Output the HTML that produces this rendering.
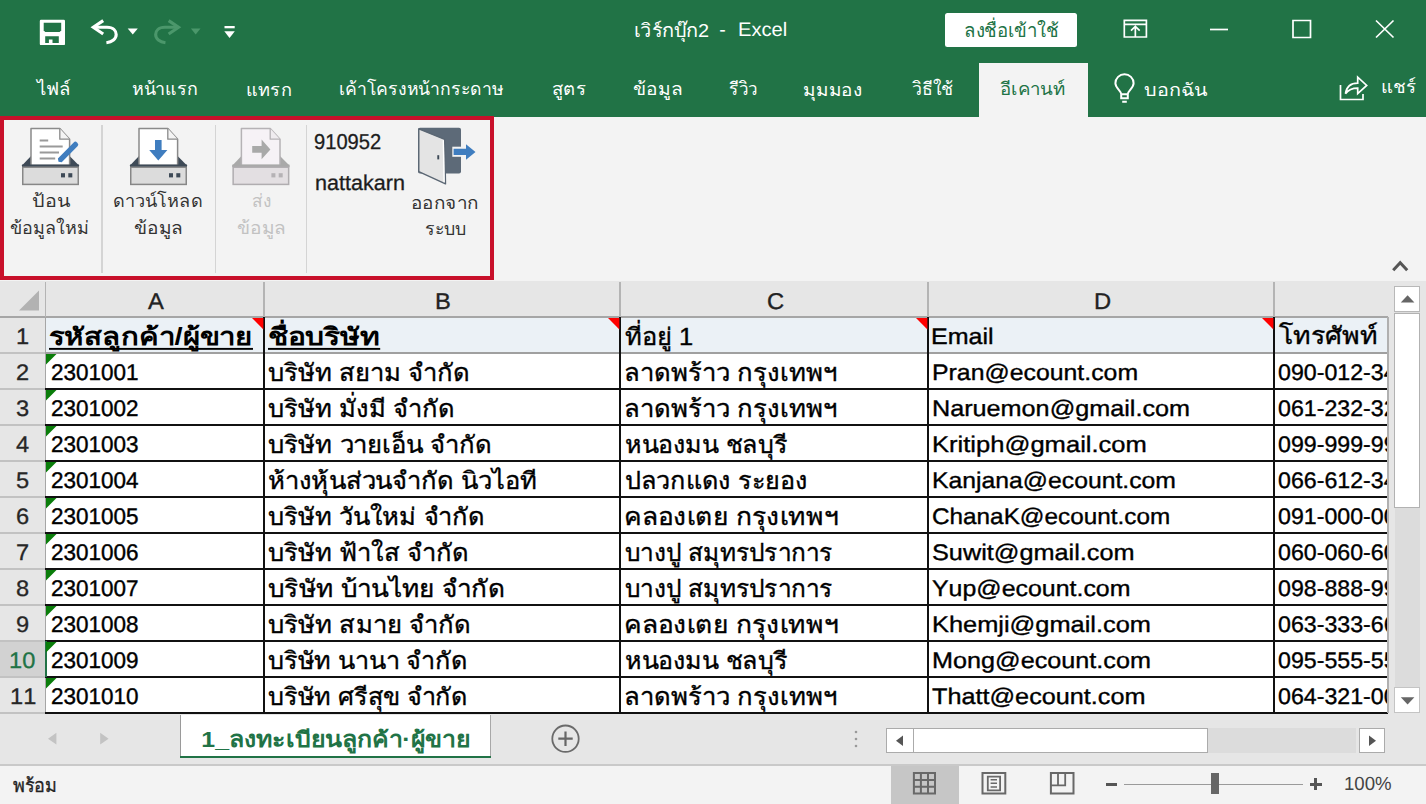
<!DOCTYPE html>
<html lang="th"><head><meta charset="utf-8"><title>Excel</title>
<style>
html,body{margin:0;padding:0}
body{width:1426px;height:804px;overflow:hidden;position:relative;background:#f3f3f3;font-family:"Liberation Sans",sans-serif}
body div,body span.l,body svg.t,body span.sr{position:absolute}
span.l{white-space:nowrap;transform-origin:0 50%;text-rendering:geometricPrecision;font-kerning:none}
span.sr{font-size:1px;line-height:1px;width:1px;height:1px;overflow:hidden;color:transparent;white-space:nowrap}
svg.t{overflow:visible}
svg.t text{font-family:"Liberation Sans",sans-serif;white-space:pre}
</style></head><body>
<div style="left:0px;top:0px;width:1426px;height:116.5px;background:#217346;"></div>
<div style="left:979.2px;top:62.6px;width:108.4px;height:54.9px;background:#f3f3f3;"></div>
<div style="left:945px;top:12.6px;width:131.8px;height:34.2px;background:#fff;border-radius:2.5px;"></div>
<div style="left:0px;top:116.5px;width:1426px;height:164.5px;background:#f3f3f3;"></div>
<div style="left:0;top:116px;width:494px;height:164px;border:4px solid #c8102a;box-sizing:border-box"></div>
<div style="left:101.4px;top:125px;width:1.2px;height:148px;background:#d4d4d4;"></div>
<div style="left:214.7px;top:125px;width:1.2px;height:148px;background:#d4d4d4;"></div>
<div style="left:306.3px;top:125px;width:1.2px;height:148px;background:#d4d4d4;"></div>
<svg class="t" style="left:633px;top:18.1px" width="77.5" height="28.48" viewBox="-1.06 -19.3 77.5 28.48"><text x="0" y="0" font-size="19" fill="#fff" textLength="75" lengthAdjust="spacingAndGlyphs">เวิร์กบุ๊ก2</text></svg>
<span class="l" style="left:719.3px;top:20.89px;font-size:19.5px;line-height:19.5px;color:#fff;">-</span>
<span class="l" style="left:738px;top:20.89px;font-size:19.5px;line-height:19.5px;color:#fff;transform:scaleX(1.0318);">Excel</span>
<svg class="t" style="left:961.7px;top:13.88px" width="98.6" height="26.27" viewBox="-1.88 -23.12 98.6 26.27"><text x="0" y="0" font-size="19" fill="#217346" textLength="95" lengthAdjust="spacingAndGlyphs">ลงชื่อเข้าใช้</text></svg>
<svg class="t" style="left:33px;top:75.93px" width="40.5" height="22.32" viewBox="-3.69 -19.17 40.5 22.32"><text x="0" y="0" font-size="18" fill="#fff" textLength="34" lengthAdjust="spacingAndGlyphs">ไฟล์</text></svg>
<svg class="t" style="left:129px;top:76.62px" width="70.8" height="21.63" viewBox="-2.66 -18.48 70.8 21.63"><text x="0" y="0" font-size="18" fill="#fff" textLength="66.5" lengthAdjust="spacingAndGlyphs">หน้าแรก</text></svg>
<svg class="t" style="left:245px;top:82.57px" width="48.2" height="15.67" viewBox="-1.18 -12.53 48.2 15.67"><text x="0" y="0" font-size="18" fill="#fff" textLength="45.6" lengthAdjust="spacingAndGlyphs">แทรก</text></svg>
<svg class="t" style="left:338px;top:75.99px" width="168" height="22.26" viewBox="-1.14 -19.11 168 22.26"><text x="0" y="0" font-size="18" fill="#fff" textLength="164.5" lengthAdjust="spacingAndGlyphs">เค้าโครงหน้ากระดาษ</text></svg>
<svg class="t" style="left:550.2px;top:82.28px" width="37.5" height="21.71" viewBox="-1.94 -12.82 37.5 21.71"><text x="0" y="0" font-size="18" fill="#fff" textLength="34" lengthAdjust="spacingAndGlyphs">สูตร</text></svg>
<svg class="t" style="left:630.5px;top:76.62px" width="52.8" height="27.37" viewBox="-2.33 -18.48 52.8 27.37"><text x="0" y="0" font-size="18" fill="#fff" textLength="49" lengthAdjust="spacingAndGlyphs">ข้อมูล</text></svg>
<svg class="t" style="left:725.6px;top:77.62px" width="32.9" height="20.63" viewBox="-3.44 -17.48 32.9 20.63"><text x="0" y="0" font-size="18" fill="#fff" textLength="28.2" lengthAdjust="spacingAndGlyphs">รีวิว</text></svg>
<svg class="t" style="left:801.3px;top:82.57px" width="62.7" height="21.41" viewBox="-2.27 -12.53 62.7 21.41"><text x="0" y="0" font-size="18" fill="#fff" textLength="58.9" lengthAdjust="spacingAndGlyphs">มุมมอง</text></svg>
<svg class="t" style="left:908.3px;top:75.93px" width="47.3" height="22.32" viewBox="-3.89 -19.17 47.3 22.32"><text x="0" y="0" font-size="18" fill="#fff" textLength="41.3" lengthAdjust="spacingAndGlyphs">วิธีใช้</text></svg>
<svg class="t" style="left:998px;top:76.63px" width="69.5" height="21.61" viewBox="-1.88 -18.46 69.5 21.61"><text x="0" y="0" font-size="18" fill="#217346" textLength="65.4" lengthAdjust="spacingAndGlyphs">อีเคานท์</text></svg>
<svg class="t" style="left:1142.4px;top:79.1px" width="67.2" height="20.65" viewBox="-2.44 -17.5 67.2 20.65"><text x="0" y="0" font-size="18" fill="#fff" textLength="62.7" lengthAdjust="spacingAndGlyphs">บอกฉัน</text></svg>
<svg class="t" style="left:1379.5px;top:75.21px" width="38.5" height="21.43" viewBox="-1.04 -18.29 38.5 21.43"><text x="0" y="0" font-size="18" fill="#fff" textLength="35.2" lengthAdjust="spacingAndGlyphs">แชร์</text></svg>
<svg class="t" style="left:29.6px;top:188.62px" width="41.8" height="21.63" viewBox="-2.44 -18.48 41.8 21.63"><text x="0" y="0" font-size="18" fill="#333" textLength="37.3" lengthAdjust="spacingAndGlyphs">ป้อน</text></svg>
<svg class="t" style="left:7.6px;top:215.43px" width="82.5" height="28.05" viewBox="-2.37 -19.17 82.5 28.05"><text x="0" y="0" font-size="18" fill="#333" textLength="78.7" lengthAdjust="spacingAndGlyphs">ข้อมูลใหม่</text></svg>
<svg class="t" style="left:111px;top:187.99px" width="93.5" height="22.26" viewBox="-2.11 -19.11 93.5 22.26"><text x="0" y="0" font-size="18" fill="#333" textLength="89.5" lengthAdjust="spacingAndGlyphs">ดาวน์โหลด</text></svg>
<svg class="t" style="left:132.3px;top:216.12px" width="52.5" height="27.37" viewBox="-2.33 -18.48 52.5 27.37"><text x="0" y="0" font-size="18" fill="#333" textLength="48.8" lengthAdjust="spacingAndGlyphs">ข้อมูล</text></svg>
<svg class="t" style="left:249.59px;top:189.23px" width="22.82" height="21.02" viewBox="-2.08 -17.87 22.82 21.02"><text x="0" y="0" font-size="18" fill="#c2c2c2" textLength="19.1" lengthAdjust="spacingAndGlyphs">ส่ง</text></svg>
<svg class="t" style="left:235px;top:216.12px" width="52.5" height="27.37" viewBox="-2.33 -18.48 52.5 27.37"><text x="0" y="0" font-size="18" fill="#c2c2c2" textLength="48.8" lengthAdjust="spacingAndGlyphs">ข้อมูล</text></svg>
<span class="l" style="left:313.5px;top:131.7px;font-size:21.5px;line-height:21.5px;color:#1c1c1c;-webkit-text-stroke:0.3px #1c1c1c;transform:scaleX(0.9366);">910952</span>
<span class="l" style="left:314.9px;top:173.4px;font-size:21.5px;line-height:21.5px;color:#1c1c1c;-webkit-text-stroke:0.3px #1c1c1c;transform:scaleX(1.0040);">nattakarn</span>
<svg class="t" style="left:409.4px;top:195.57px" width="71.4" height="15.53" viewBox="-1.63 -12.53 71.4 15.53"><text x="0" y="0" font-size="18" fill="#333" textLength="68.4" lengthAdjust="spacingAndGlyphs">ออกจาก</text></svg>
<svg class="t" style="left:422.3px;top:223.03px" width="45.6" height="15.62" viewBox="-2.73 -12.47 45.6 15.62"><text x="0" y="0" font-size="18" fill="#333" textLength="41.4" lengthAdjust="spacingAndGlyphs">ระบบ</text></svg>
<svg class="t" style="left:0;top:0" width="500" height="200"><path d="M31 156H69.6L79 165.5V167.2H22V165.5Z" fill="#3e4a57"/><path d="M31 128.4H59.8L69.6 139.2V165.4H31Z" fill="#fff" stroke="#8a8a8a" stroke-width="1.5" stroke-linejoin="round"/><path d="M59.8 128.4V139.2H69.6" fill="#f4f4f4" stroke="#8a8a8a" stroke-width="1.3" stroke-linejoin="round"/><path d="M22 164.6H79V167H22Z" fill="#3e4a57"/><rect x="22.75" y="167.2" width="55.5" height="17.2" fill="#dcdcdc" stroke="#878787" stroke-width="1.5"/><rect x="61" y="173.2" width="4" height="4.2" fill="#3e4a57"/><rect x="68.3" y="173.2" width="4" height="4.2" fill="#3e4a57"/><path d="M39.700 140.500H48.200M39.700 146.600H62.700M39.700 152.400H59M39.700 158.400H55.200" stroke="#9a9a9a" stroke-width="2"/><path d="M58.5 161.800L57.900 158.600L73.700 142.400A2.300 2.300 0 0 1 77 142.400L77.500 142.900A2.300 2.300 0 0 1 77.500 146.200L61.700 162.300Z" fill="#3f7dbf"/></svg>
<svg class="t" style="left:0;top:0" width="500" height="200"><path d="M139 156H177.6L187 165.5V167.2H130V165.5Z" fill="#3e4a57"/><path d="M139 128.4H167.79999999999998L177.6 139.2V165.4H139Z" fill="#fff" stroke="#8a8a8a" stroke-width="1.5" stroke-linejoin="round"/><path d="M167.79999999999998 128.4V139.2H177.6" fill="#f4f4f4" stroke="#8a8a8a" stroke-width="1.3" stroke-linejoin="round"/><path d="M130 164.6H187V167H130Z" fill="#3e4a57"/><rect x="130.75" y="167.2" width="55.5" height="17.2" fill="#dcdcdc" stroke="#878787" stroke-width="1.5"/><rect x="169" y="173.2" width="4" height="4.2" fill="#3e4a57"/><rect x="176.3" y="173.2" width="4" height="4.2" fill="#3e4a57"/><path d="M155 140H161.600V150H167.400L158.300 160.400L149.200 150H155Z" fill="#3f7dbf"/></svg>
<svg class="t" style="left:0;top:0" width="500" height="200"><path d="M241.4 156H280.0L289.4 165.5V167.2H232.4V165.5Z" fill="#a9a9a9"/><path d="M241.4 128.4H270.2L280.0 139.2V165.4H241.4Z" fill="#f6f2f6" stroke="#b5b2b5" stroke-width="1.5" stroke-linejoin="round"/><path d="M270.2 128.4V139.2H280.0" fill="#efecef" stroke="#b5b2b5" stroke-width="1.3" stroke-linejoin="round"/><path d="M232.4 164.6H289.4V167H232.4Z" fill="#a9a9a9"/><rect x="233.15" y="167.2" width="55.5" height="17.2" fill="#e3dfe2" stroke="#b0adb0" stroke-width="1.5"/><rect x="271.4" y="173.2" width="4" height="4.2" fill="#b5b2b5"/><rect x="278.7" y="173.2" width="4" height="4.2" fill="#b5b2b5"/><path d="M252.200 146H261.600V139.600L270.400 149.400L261.600 159.300V152.700H252.200Z" fill="#a9a9a9"/></svg>
<svg class="t" style="left:0;top:0" width="500" height="200">
<rect x="418" y="127.800" width="43" height="45.600" rx="2" fill="#5d6a78"/>
<path d="M452.300 146.700H462.500V156.800H452.300Z" fill="#f3f3f3"/>
<path d="M418.800 128.900L444.700 139.400L445.500 183.900L418.800 171.700Z" fill="#e4e4e4" stroke="#5a6673" stroke-width="1.400" stroke-linejoin="round"/>
<path d="M443.300 140.200L444.100 182.300" stroke="#fff" stroke-width="1.300"/>
<rect x="437.300" y="155.200" width="1.900" height="4.200" fill="#3e4a57"/>
<path d="M453.600 148.800H466V144.200L475.500 151.900L466 159.700V154.900H453.600Z" fill="#3f7dbf"/>
</svg>
<div style="left:0px;top:281px;width:1426px;height:36.2px;background:#e6e6e6;"></div>
<div style="left:0px;top:317.2px;width:45.4px;height:396px;background:#e6e6e6;"></div>
<div style="left:45.4px;top:317.2px;width:1342.2px;height:396px;background:#fff;"></div>
<div style="left:45.4px;top:317.2px;width:1342.2px;height:36px;background:#ebf1f6;"></div>
<div style="left:1387.6px;top:281px;width:38.4px;height:433.2px;background:#e6e6e6;"></div>
<div style="left:0px;top:641.2px;width:45.4px;height:36px;background:#d2d2d2;"></div>
<div style="left:0px;top:316.4px;width:1387.6px;height:1.5px;background:#a6a6a6;"></div>
<div style="left:44.6px;top:282px;width:1.5px;height:35.2px;background:#b4b4b4;"></div>
<div style="left:263px;top:282px;width:1.5px;height:35.2px;background:#b4b4b4;"></div>
<div style="left:619.2px;top:282px;width:1.5px;height:35.2px;background:#b4b4b4;"></div>
<div style="left:927.3px;top:282px;width:1.5px;height:35.2px;background:#b4b4b4;"></div>
<div style="left:1273.2px;top:282px;width:1.5px;height:35.2px;background:#b4b4b4;"></div>
<div style="left:0px;top:352.4px;width:45.4px;height:1.5px;background:#c2c2c2;"></div>
<div style="left:0px;top:388.4px;width:45.4px;height:1.5px;background:#c2c2c2;"></div>
<div style="left:0px;top:424.4px;width:45.4px;height:1.5px;background:#c2c2c2;"></div>
<div style="left:0px;top:460.4px;width:45.4px;height:1.5px;background:#c2c2c2;"></div>
<div style="left:0px;top:496.4px;width:45.4px;height:1.5px;background:#c2c2c2;"></div>
<div style="left:0px;top:532.4px;width:45.4px;height:1.5px;background:#c2c2c2;"></div>
<div style="left:0px;top:568.4px;width:45.4px;height:1.5px;background:#c2c2c2;"></div>
<div style="left:0px;top:604.4px;width:45.4px;height:1.5px;background:#c2c2c2;"></div>
<div style="left:0px;top:640.4px;width:45.4px;height:1.5px;background:#c2c2c2;"></div>
<div style="left:0px;top:676.4px;width:45.4px;height:1.5px;background:#c2c2c2;"></div>
<div style="left:0px;top:712.4px;width:45.4px;height:1.5px;background:#c2c2c2;"></div>
<div style="left:44.6px;top:317.2px;width:1.5px;height:396px;background:#a6a6a6;"></div>
<div style="left:45.4px;top:352.3px;width:1342.2px;height:1.8px;background:#a0a0a0;"></div>
<div style="left:45.4px;top:388.3px;width:1342.2px;height:1.8px;background:#111;"></div>
<div style="left:45.4px;top:424.3px;width:1342.2px;height:1.8px;background:#111;"></div>
<div style="left:45.4px;top:460.3px;width:1342.2px;height:1.8px;background:#111;"></div>
<div style="left:45.4px;top:496.3px;width:1342.2px;height:1.8px;background:#111;"></div>
<div style="left:45.4px;top:532.3px;width:1342.2px;height:1.8px;background:#111;"></div>
<div style="left:45.4px;top:568.3px;width:1342.2px;height:1.8px;background:#111;"></div>
<div style="left:45.4px;top:604.3px;width:1342.2px;height:1.8px;background:#111;"></div>
<div style="left:45.4px;top:640.3px;width:1342.2px;height:1.8px;background:#111;"></div>
<div style="left:45.4px;top:676.3px;width:1342.2px;height:1.8px;background:#111;"></div>
<div style="left:45.4px;top:712.3px;width:1342.2px;height:1.8px;background:#111;"></div>
<div style="left:262.9px;top:317.2px;width:1.8px;height:396px;background:#111;"></div>
<div style="left:619.1px;top:317.2px;width:1.8px;height:396px;background:#111;"></div>
<div style="left:927.2px;top:317.2px;width:1.8px;height:396px;background:#111;"></div>
<div style="left:1273.1px;top:317.2px;width:1.8px;height:396px;background:#111;"></div>
<div style="left:45.4px;top:712.2px;width:1342.2px;height:2.2px;background:#111;"></div>
<div style="left:1387.3px;top:317.2px;width:1.5px;height:396px;background:#b0b0b0;"></div>
<svg class="t" style="left:18px;top:290px" width="22" height="22"><path d="M21 0.5V20.5H1Z" fill="#b2b2b2"/></svg>
<span class="l" style="left:147.89px;top:290px;font-size:22.8px;line-height:22.8px;color:#222;-webkit-text-stroke:0.35px #222;transform:scaleX(1.0400);">A</span>
<span class="l" style="left:435.19px;top:290px;font-size:22.8px;line-height:22.8px;color:#222;-webkit-text-stroke:0.35px #222;transform:scaleX(1.0400);">B</span>
<span class="l" style="left:766.69px;top:290px;font-size:22.8px;line-height:22.8px;color:#222;-webkit-text-stroke:0.35px #222;transform:scaleX(1.0400);">C</span>
<span class="l" style="left:1093.69px;top:290px;font-size:22.8px;line-height:22.8px;color:#222;-webkit-text-stroke:0.35px #222;transform:scaleX(1.0400);">D</span>
<span class="l" style="left:16.03px;top:326.45px;font-size:22.5px;line-height:22.5px;color:#262626;-webkit-text-stroke:0.3px #262626;transform:scaleX(1.0500);">1</span>
<span class="l" style="left:16.03px;top:362.45px;font-size:22.5px;line-height:22.5px;color:#262626;-webkit-text-stroke:0.3px #262626;transform:scaleX(1.0500);">2</span>
<span class="l" style="left:16.03px;top:398.45px;font-size:22.5px;line-height:22.5px;color:#262626;-webkit-text-stroke:0.3px #262626;transform:scaleX(1.0500);">3</span>
<span class="l" style="left:16.03px;top:434.45px;font-size:22.5px;line-height:22.5px;color:#262626;-webkit-text-stroke:0.3px #262626;transform:scaleX(1.0500);">4</span>
<span class="l" style="left:16.03px;top:470.45px;font-size:22.5px;line-height:22.5px;color:#262626;-webkit-text-stroke:0.3px #262626;transform:scaleX(1.0500);">5</span>
<span class="l" style="left:16.03px;top:506.45px;font-size:22.5px;line-height:22.5px;color:#262626;-webkit-text-stroke:0.3px #262626;transform:scaleX(1.0500);">6</span>
<span class="l" style="left:16.03px;top:542.45px;font-size:22.5px;line-height:22.5px;color:#262626;-webkit-text-stroke:0.3px #262626;transform:scaleX(1.0500);">7</span>
<span class="l" style="left:16.03px;top:578.45px;font-size:22.5px;line-height:22.5px;color:#262626;-webkit-text-stroke:0.3px #262626;transform:scaleX(1.0500);">8</span>
<span class="l" style="left:16.03px;top:614.45px;font-size:22.5px;line-height:22.5px;color:#262626;-webkit-text-stroke:0.3px #262626;transform:scaleX(1.0500);">9</span>
<span class="l" style="left:9.46px;top:650.45px;font-size:22.5px;line-height:22.5px;color:#217346;-webkit-text-stroke:0.3px #217346;transform:scaleX(1.0500);">10</span>
<span class="l" style="left:10.34px;top:686.45px;font-size:22.5px;line-height:22.5px;color:#262626;-webkit-text-stroke:0.3px #262626;transform:scaleX(1.0500);">11</span>
<div style="left:44.9px;top:641.2px;width:2.2px;height:36px;background:#217346;"></div>
<svg class="t" style="left:46.6px;top:321.17px" width="208" height="33.13" viewBox="-1.5 -23.73 208 33.13"><text x="0" y="0" font-size="24" font-weight="bold" fill="#000" textLength="204" lengthAdjust="spacingAndGlyphs">รหัสลูกค้า/ผู้ขาย</text><rect x="0.5" y="3.2" width="204" height="1.9" fill="#000"/></svg>
<svg class="t" style="left:266.1px;top:316.16px" width="116.2" height="31.86" viewBox="-1.75 -28.74 116.2 31.86"><text x="0" y="0" font-size="24" font-weight="bold" fill="#000" textLength="112.5" lengthAdjust="spacingAndGlyphs">ชื่อบริษัท</text><rect x="0.25" y="3.2" width="112.2" height="1.9" fill="#000"/></svg>
<svg class="t" style="left:622.7px;top:316.16px" width="69.99" height="38.52" viewBox="-2.22 -28.74 69.99 38.52"><text x="0" y="0" font-size="24" fill="#000" stroke="#000" stroke-width="0.35" textLength="68" lengthAdjust="spacingAndGlyphs">ที่อยู่ 1</text></svg>
<span class="l" style="left:931.2px;top:325.85px;font-size:22.5px;line-height:22.5px;color:#000;-webkit-text-stroke:0.35px #000;transform:scaleX(1.1126);">Email</span>
<svg class="t" style="left:1275.9px;top:319.49px" width="103.7" height="28.55" viewBox="-2.72 -25.41 103.7 28.55"><text x="0" y="0" font-size="24" fill="#000" stroke="#000" stroke-width="0.35" textLength="98.9" lengthAdjust="spacingAndGlyphs">โทรศัพท์</text></svg>
<span class="l" style="left:50.6px;top:361.97px;font-size:22.6px;line-height:22.6px;color:#000;-webkit-text-stroke:0.4px #000;transform:scaleX(0.9956);">2301001</span>
<svg class="t" style="left:265.8px;top:357.72px" width="205.5" height="26.32" viewBox="-2.07 -23.18 205.5 26.32"><text x="0" y="0" font-size="24" fill="#000" stroke="#000" stroke-width="0.35" textLength="202.4" lengthAdjust="spacingAndGlyphs">บริษัท สยาม จำกัด</text></svg>
<svg class="t" style="left:622.8px;top:357.19px" width="215.8" height="33.49" viewBox="-1.05 -23.71 215.8 33.49"><text x="0" y="0" font-size="24" fill="#000" stroke="#000" stroke-width="0.35" textLength="212.7" lengthAdjust="spacingAndGlyphs">ลาดพร้าว กรุงเทพฯ</text></svg>
<span class="l" style="left:931.6px;top:361.85px;font-size:22.5px;line-height:22.5px;color:#000;-webkit-text-stroke:0.35px #000;transform:scaleX(1.1040);">Pran@ecount.com</span>
<div style="left:1275.0px;top:354.2px;width:112.1px;height:34px;overflow:hidden">
<span class="l" style="left:3.2px;top:7.65px;font-size:22.5px;line-height:22.5px;-webkit-text-stroke:0.35px #000;transform:scaleX(1.03)">090-012-34</span></div>
<span class="l" style="left:50.6px;top:397.97px;font-size:22.6px;line-height:22.6px;color:#000;-webkit-text-stroke:0.4px #000;transform:scaleX(0.9956);">2301002</span>
<svg class="t" style="left:265.8px;top:388.16px" width="189.7" height="31.86" viewBox="-2.07 -28.74 189.7 31.86"><text x="0" y="0" font-size="24" fill="#000" stroke="#000" stroke-width="0.35" textLength="186.6" lengthAdjust="spacingAndGlyphs">บริษัท มั่งมี จำกัด</text></svg>
<svg class="t" style="left:622.8px;top:393.19px" width="215.8" height="33.49" viewBox="-1.05 -23.71 215.8 33.49"><text x="0" y="0" font-size="24" fill="#000" stroke="#000" stroke-width="0.35" textLength="212.7" lengthAdjust="spacingAndGlyphs">ลาดพร้าว กรุงเทพฯ</text></svg>
<span class="l" style="left:931.6px;top:397.85px;font-size:22.5px;line-height:22.5px;color:#000;-webkit-text-stroke:0.35px #000;transform:scaleX(1.1197);">Naruemon@gmail.com</span>
<div style="left:1275.0px;top:390.2px;width:112.1px;height:34px;overflow:hidden">
<span class="l" style="left:3.2px;top:7.65px;font-size:22.5px;line-height:22.5px;-webkit-text-stroke:0.35px #000;transform:scaleX(1.03)">061-232-32</span></div>
<span class="l" style="left:50.6px;top:433.97px;font-size:22.6px;line-height:22.6px;color:#000;-webkit-text-stroke:0.4px #000;transform:scaleX(0.9956);">2301003</span>
<svg class="t" style="left:265.8px;top:426.86px" width="227.6" height="29.18" viewBox="-2.08 -26.04 227.6 29.18"><text x="0" y="0" font-size="24" fill="#000" stroke="#000" stroke-width="0.35" textLength="224.4" lengthAdjust="spacingAndGlyphs">บริษัท วายเอ็น จำกัด</text></svg>
<svg class="t" style="left:622.8px;top:428.87px" width="166.5" height="33.81" viewBox="-1.79 -24.03 166.5 33.81"><text x="0" y="0" font-size="24" fill="#000" stroke="#000" stroke-width="0.35" textLength="162.4" lengthAdjust="spacingAndGlyphs">หนองมน ชลบุรี</text></svg>
<span class="l" style="left:931.6px;top:433.85px;font-size:22.5px;line-height:22.5px;color:#000;-webkit-text-stroke:0.35px #000;transform:scaleX(1.1361);">Kritiph@gmail.com</span>
<div style="left:1275.0px;top:426.2px;width:112.1px;height:34px;overflow:hidden">
<span class="l" style="left:3.2px;top:7.65px;font-size:22.5px;line-height:22.5px;-webkit-text-stroke:0.35px #000;transform:scaleX(1.03)">099-999-99</span></div>
<span class="l" style="left:50.6px;top:469.97px;font-size:22.6px;line-height:22.6px;color:#000;-webkit-text-stroke:0.4px #000;transform:scaleX(0.9956);">2301004</span>
<svg class="t" style="left:265.8px;top:463.55px" width="272.4" height="35.13" viewBox="-1.77 -25.35 272.4 35.13"><text x="0" y="0" font-size="24" fill="#000" stroke="#000" stroke-width="0.35" textLength="269.3" lengthAdjust="spacingAndGlyphs">ห้างหุ้นส่วนจำกัด นิวไอที</text></svg>
<svg class="t" style="left:622.8px;top:468.11px" width="185.6" height="23.93" viewBox="-1.76 -20.79 185.6 23.93"><text x="0" y="0" font-size="24" fill="#000" stroke="#000" stroke-width="0.35" textLength="182.6" lengthAdjust="spacingAndGlyphs">ปลวกแดง ระยอง</text></svg>
<span class="l" style="left:931.6px;top:469.85px;font-size:22.5px;line-height:22.5px;color:#000;-webkit-text-stroke:0.35px #000;transform:scaleX(1.1004);">Kanjana@ecount.com</span>
<div style="left:1275.0px;top:462.2px;width:112.1px;height:34px;overflow:hidden">
<span class="l" style="left:3.2px;top:7.65px;font-size:22.5px;line-height:22.5px;-webkit-text-stroke:0.35px #000;transform:scaleX(1.03)">066-612-34</span></div>
<span class="l" style="left:50.6px;top:505.97px;font-size:22.6px;line-height:22.6px;color:#000;-webkit-text-stroke:0.4px #000;transform:scaleX(0.9956);">2301005</span>
<svg class="t" style="left:265.8px;top:499.55px" width="220.3" height="28.49" viewBox="-2.08 -25.35 220.3 28.49"><text x="0" y="0" font-size="24" fill="#000" stroke="#000" stroke-width="0.35" textLength="217.1" lengthAdjust="spacingAndGlyphs">บริษัท วันใหม่ จำกัด</text></svg>
<svg class="t" style="left:622.8px;top:508.3px" width="216.9" height="26.38" viewBox="-0.9 -16.6 216.9 26.38"><text x="0" y="0" font-size="24" fill="#000" stroke="#000" stroke-width="0.35" textLength="214" lengthAdjust="spacingAndGlyphs">คลองเตย กรุงเทพฯ</text></svg>
<span class="l" style="left:931.6px;top:505.85px;font-size:22.5px;line-height:22.5px;color:#000;-webkit-text-stroke:0.35px #000;transform:scaleX(1.0804);">ChanaK@ecount.com</span>
<div style="left:1275.0px;top:498.2px;width:112.1px;height:34px;overflow:hidden">
<span class="l" style="left:3.2px;top:7.65px;font-size:22.5px;line-height:22.5px;-webkit-text-stroke:0.35px #000;transform:scaleX(1.03)">091-000-00</span></div>
<span class="l" style="left:50.6px;top:541.97px;font-size:22.6px;line-height:22.6px;color:#000;-webkit-text-stroke:0.4px #000;transform:scaleX(0.9956);">2301006</span>
<svg class="t" style="left:265.8px;top:535.55px" width="203.9" height="28.49" viewBox="-2.07 -25.35 203.9 28.49"><text x="0" y="0" font-size="24" fill="#000" stroke="#000" stroke-width="0.35" textLength="200.9" lengthAdjust="spacingAndGlyphs">บริษัท ฟ้าใส จำกัด</text></svg>
<svg class="t" style="left:622.8px;top:540.11px" width="212" height="30.57" viewBox="-2.11 -20.79 212 30.57"><text x="0" y="0" font-size="24" fill="#000" stroke="#000" stroke-width="0.35" textLength="207.6" lengthAdjust="spacingAndGlyphs">บางปู สมุทรปราการ</text></svg>
<span class="l" style="left:931.6px;top:541.85px;font-size:22.5px;line-height:22.5px;color:#000;-webkit-text-stroke:0.35px #000;transform:scaleX(1.1231);">Suwit@gmail.com</span>
<div style="left:1275.0px;top:534.2px;width:112.1px;height:34px;overflow:hidden">
<span class="l" style="left:3.2px;top:7.65px;font-size:22.5px;line-height:22.5px;-webkit-text-stroke:0.35px #000;transform:scaleX(1.03)">060-060-60</span></div>
<span class="l" style="left:50.6px;top:577.97px;font-size:22.6px;line-height:22.6px;color:#000;-webkit-text-stroke:0.4px #000;transform:scaleX(0.9956);">2301007</span>
<svg class="t" style="left:265.8px;top:571.55px" width="240.3" height="28.49" viewBox="-2.06 -25.35 240.3 28.49"><text x="0" y="0" font-size="24" fill="#000" stroke="#000" stroke-width="0.35" textLength="237.3" lengthAdjust="spacingAndGlyphs">บริษัท บ้านไทย จำกัด</text></svg>
<svg class="t" style="left:622.8px;top:576.11px" width="212" height="30.57" viewBox="-2.11 -20.79 212 30.57"><text x="0" y="0" font-size="24" fill="#000" stroke="#000" stroke-width="0.35" textLength="207.6" lengthAdjust="spacingAndGlyphs">บางปู สมุทรปราการ</text></svg>
<span class="l" style="left:931.6px;top:577.85px;font-size:22.5px;line-height:22.5px;color:#000;-webkit-text-stroke:0.35px #000;transform:scaleX(1.1076);">Yup@ecount.com</span>
<div style="left:1275.0px;top:570.2px;width:112.1px;height:34px;overflow:hidden">
<span class="l" style="left:3.2px;top:7.65px;font-size:22.5px;line-height:22.5px;-webkit-text-stroke:0.35px #000;transform:scaleX(1.03)">098-888-99</span></div>
<span class="l" style="left:50.6px;top:613.97px;font-size:22.6px;line-height:22.6px;color:#000;-webkit-text-stroke:0.4px #000;transform:scaleX(0.9956);">2301008</span>
<svg class="t" style="left:265.8px;top:609.72px" width="205.8" height="26.32" viewBox="-2.07 -23.18 205.8 26.32"><text x="0" y="0" font-size="24" fill="#000" stroke="#000" stroke-width="0.35" textLength="202.7" lengthAdjust="spacingAndGlyphs">บริษัท สมาย จำกัด</text></svg>
<svg class="t" style="left:622.8px;top:616.3px" width="216.9" height="26.38" viewBox="-0.9 -16.6 216.9 26.38"><text x="0" y="0" font-size="24" fill="#000" stroke="#000" stroke-width="0.35" textLength="214" lengthAdjust="spacingAndGlyphs">คลองเตย กรุงเทพฯ</text></svg>
<span class="l" style="left:931.6px;top:613.85px;font-size:22.5px;line-height:22.5px;color:#000;-webkit-text-stroke:0.35px #000;transform:scaleX(1.1280);">Khemji@gmail.com</span>
<div style="left:1275.0px;top:606.2px;width:112.1px;height:34px;overflow:hidden">
<span class="l" style="left:3.2px;top:7.65px;font-size:22.5px;line-height:22.5px;-webkit-text-stroke:0.35px #000;transform:scaleX(1.03)">063-333-66</span></div>
<span class="l" style="left:50.6px;top:649.97px;font-size:22.6px;line-height:22.6px;color:#000;-webkit-text-stroke:0.4px #000;transform:scaleX(0.9956);">2301009</span>
<svg class="t" style="left:265.8px;top:645.72px" width="202.5" height="26.3" viewBox="-2.09 -23.18 202.5 26.3"><text x="0" y="0" font-size="24" fill="#000" stroke="#000" stroke-width="0.35" textLength="199.3" lengthAdjust="spacingAndGlyphs">บริษัท นานา จำกัด</text></svg>
<svg class="t" style="left:622.8px;top:644.87px" width="166.5" height="33.81" viewBox="-1.79 -24.03 166.5 33.81"><text x="0" y="0" font-size="24" fill="#000" stroke="#000" stroke-width="0.35" textLength="162.4" lengthAdjust="spacingAndGlyphs">หนองมน ชลบุรี</text></svg>
<span class="l" style="left:931.6px;top:649.85px;font-size:22.5px;line-height:22.5px;color:#000;-webkit-text-stroke:0.35px #000;transform:scaleX(1.1205);">Mong@ecount.com</span>
<div style="left:1275.0px;top:642.2px;width:112.1px;height:34px;overflow:hidden">
<span class="l" style="left:3.2px;top:7.65px;font-size:22.5px;line-height:22.5px;-webkit-text-stroke:0.35px #000;transform:scaleX(1.03)">095-555-55</span></div>
<span class="l" style="left:50.6px;top:685.97px;font-size:22.6px;line-height:22.6px;color:#000;-webkit-text-stroke:0.4px #000;transform:scaleX(0.9956);">2301010</span>
<svg class="t" style="left:265.8px;top:680.87px" width="203.1" height="33.81" viewBox="-2.09 -24.03 203.1 33.81"><text x="0" y="0" font-size="24" fill="#000" stroke="#000" stroke-width="0.35" textLength="199.9" lengthAdjust="spacingAndGlyphs">บริษัท ศรีสุข จำกัด</text></svg>
<svg class="t" style="left:622.8px;top:681.19px" width="215.8" height="33.49" viewBox="-1.05 -23.71 215.8 33.49"><text x="0" y="0" font-size="24" fill="#000" stroke="#000" stroke-width="0.35" textLength="212.7" lengthAdjust="spacingAndGlyphs">ลาดพร้าว กรุงเทพฯ</text></svg>
<span class="l" style="left:931.6px;top:685.85px;font-size:22.5px;line-height:22.5px;color:#000;-webkit-text-stroke:0.35px #000;transform:scaleX(1.1212);">Thatt@ecount.com</span>
<div style="left:1275.0px;top:678.2px;width:112.1px;height:34px;overflow:hidden">
<span class="l" style="left:3.2px;top:7.65px;font-size:22.5px;line-height:22.5px;-webkit-text-stroke:0.35px #000;transform:scaleX(1.03)">064-321-00</span></div>
<svg class="t" style="left:46.2px;top:354px" width="11" height="11"><path d="M0 0H10.5L0 10.5Z" fill="#0a7d0a"/></svg>
<svg class="t" style="left:46.2px;top:390px" width="11" height="11"><path d="M0 0H10.5L0 10.5Z" fill="#0a7d0a"/></svg>
<svg class="t" style="left:46.2px;top:426px" width="11" height="11"><path d="M0 0H10.5L0 10.5Z" fill="#0a7d0a"/></svg>
<svg class="t" style="left:46.2px;top:462px" width="11" height="11"><path d="M0 0H10.5L0 10.5Z" fill="#0a7d0a"/></svg>
<svg class="t" style="left:46.2px;top:498px" width="11" height="11"><path d="M0 0H10.5L0 10.5Z" fill="#0a7d0a"/></svg>
<svg class="t" style="left:46.2px;top:534px" width="11" height="11"><path d="M0 0H10.5L0 10.5Z" fill="#0a7d0a"/></svg>
<svg class="t" style="left:46.2px;top:570px" width="11" height="11"><path d="M0 0H10.5L0 10.5Z" fill="#0a7d0a"/></svg>
<svg class="t" style="left:46.2px;top:606px" width="11" height="11"><path d="M0 0H10.5L0 10.5Z" fill="#0a7d0a"/></svg>
<svg class="t" style="left:46.2px;top:642px" width="11" height="11"><path d="M0 0H10.5L0 10.5Z" fill="#0a7d0a"/></svg>
<svg class="t" style="left:46.2px;top:678px" width="11" height="11"><path d="M0 0H10.5L0 10.5Z" fill="#0a7d0a"/></svg>
<svg class="t" style="left:251.6px;top:318px" width="12" height="12"><path d="M0 0H11.4V11.4Z" fill="#f00"/></svg>
<svg class="t" style="left:607.8px;top:318px" width="12" height="12"><path d="M0 0H11.4V11.4Z" fill="#f00"/></svg>
<svg class="t" style="left:915.9px;top:318px" width="12" height="12"><path d="M0 0H11.4V11.4Z" fill="#f00"/></svg>
<svg class="t" style="left:1261.8px;top:318px" width="12" height="12"><path d="M0 0H11.4V11.4Z" fill="#f00"/></svg>
<div style="left:0px;top:714.2px;width:1426px;height:50.8px;background:#e6e6e6;"></div>
<div style="left:0px;top:765px;width:1426px;height:39px;background:#f3f3f3;"></div>
<div style="left:0px;top:763.9px;width:1426px;height:2.3px;background:#c9c9c9;"></div>
<div style="left:180px;top:714.5px;width:311.3px;height:41.5px;background:#fff;border-left:1.3px solid #9a9a9a;border-right:1.3px solid #a8a8a8;box-sizing:border-box"></div>
<div style="left:180px;top:755.6px;width:311.3px;height:2.8px;background:#217346;"></div>
<svg class="t" style="left:200.5px;top:725.29px" width="270.5" height="30.69" viewBox="-0.3 -21.91 270.5 30.69"><text x="0" y="0" font-size="22" font-weight="bold" fill="#217346" textLength="269.4" lengthAdjust="spacingAndGlyphs">1_ลงทะเบียนลูกค้า·ผู้ขาย</text></svg>
<svg class="t" style="left:40px;top:728px" width="80" height="22"><path d="M16.4 4.8V16.6L8 10.7Z M60.2 4.8V16.6L68.6 10.7Z" fill="#c3c3c3"/></svg>
<svg class="t" style="left:549px;top:722px" width="34" height="34"><circle cx="16.5" cy="16.7" r="13.2" fill="none" stroke="#6a6a6a" stroke-width="1.8"/><path d="M16.5 9.5V23.9M9.3 16.7H23.7" stroke="#666" stroke-width="2.2"/></svg>
<div style="left:1207px;top:727.6px;width:149px;height:25.5px;background:#dcdcdc;"></div>
<div style="left:886px;top:727.6px;width:28px;height:25.5px;background:#fff;border:1px solid #ababab;box-sizing:border-box"></div>
<div style="left:913px;top:727.6px;width:295px;height:25.5px;background:#fff;border:1px solid #ababab;box-sizing:border-box"></div>
<div style="left:1359.3px;top:727.6px;width:25.6px;height:25.5px;background:#fff;border:1px solid #ababab;box-sizing:border-box"></div>
<svg class="t" style="left:887px;top:727.6px" width="24" height="26"><path d="M16 7.5V18L9 12.75Z" fill="#555"/></svg>
<svg class="t" style="left:1359.3px;top:727.6px" width="26" height="26"><path d="M10 7.5V18L17 12.75Z" fill="#555"/></svg>
<svg class="t" style="left:852px;top:729px" width="8" height="22"><circle cx="4" cy="3" r="1.3" fill="#999"/><circle cx="4" cy="10" r="1.3" fill="#999"/><circle cx="4" cy="17" r="1.3" fill="#999"/></svg>
<div style="left:1394.7px;top:311px;width:25.3px;height:377px;background:#dcdcdc;"></div>
<div style="left:1394.2px;top:313.2px;width:26px;height:195.2px;background:#fff;border:1.3px solid #b2b2b2;box-sizing:border-box"></div>
<div style="left:1394.4px;top:286.4px;width:25.6px;height:25.2px;background:#fff;border:1.2px solid #b8b8b8;box-sizing:border-box"></div>
<div style="left:1394.4px;top:686.7px;width:25.6px;height:26.6px;background:#fff;border:1.2px solid #c4c4c4;box-sizing:border-box"></div>
<svg class="t" style="left:1394.7px;top:286.7px" width="25" height="25"><path d="M5.8 15.6H19.4L12.6 8.200Z" fill="#666"/></svg>
<svg class="t" style="left:1394.7px;top:687px" width="25" height="27"><path d="M5.8 10.2H19.4L12.6 17.600Z" fill="#666"/></svg>
<svg class="t" style="left:1390px;top:258px" width="22" height="18"><path d="M3.2 12.3L10.2 4.8L17.200 12.3" fill="none" stroke="#555" stroke-width="3"/></svg>
<svg class="t" style="left:9.8px;top:771.86px" width="48.7" height="22.8" viewBox="-2.68 -19.64 48.7 22.8"><text x="0" y="0" font-size="19" fill="#222" stroke="#222" stroke-width="0.3" textLength="44.5" lengthAdjust="spacingAndGlyphs">พร้อม</text></svg>
<div style="left:891.4px;top:765.6px;width:67.8px;height:38.4px;background:#c6c6c6;"></div>
<svg class="t" style="left:900px;top:764px" width="190" height="40" fill="none" stroke="#686868" stroke-width="2"><path d="M13.9 9H35V29.600H13.9Z M13.9 15.900H35M13.9 22.700H35M20.900 9V29.600M28 9V29.600"/><path d="M82.500 9H105.300V29.600H82.500Z"/><path d="M87.800 12.700H100.100V26.300H87.800Z" stroke-width="1.800"/><path d="M90.600 15.700H97M90.600 19.300H97M90.600 22.900H97" stroke-width="1.500"/><path d="M150.900 9H173.500V29.600H150.900Z"/><path d="M158 9V21.300M165.200 9V21.300H150.900" stroke-width="1.800"/></svg>
<div style="left:1105.5px;top:782.8px;width:11px;height:3px;background:#555;"></div>
<div style="left:1124px;top:784.2px;width:179px;height:1.2px;background:#9a9a9a;"></div>
<div style="left:1210.5px;top:773.2px;width:8.4px;height:20.4px;background:#666;"></div>
<div style="left:1309.8px;top:783px;width:12px;height:2.8px;background:#555;"></div>
<div style="left:1314.4px;top:778.4px;width:2.8px;height:12px;background:#555;"></div>
<span class="l" style="left:1343.6px;top:774.62px;font-size:19px;line-height:19px;color:#444;transform:scaleX(0.9795);">100%</span>
<svg class="t" style="left:0;top:0" width="260" height="60">
<rect x="39.800" y="19.800" width="25.200" height="25.300" rx="1.200" fill="#fff"/>
<path d="M43.700 22.800H61.200V30.200L59.700 31.900H45.200L43.700 30.200Z" fill="#217346"/>
<path d="M45.200 36.300H58.800V42.900H52.500V39.500H48.900V42.900H45.200Z" fill="#217346"/>
<g fill="none" stroke="#fff" stroke-width="3.100">
<path d="M103.200 20.600L93.300 27.300L103.200 34"/><path d="M94 27.300H107C113.500 27.300 116.200 30.800 116.200 34.600C116.200 38.900 112.200 41.900 106.400 42.700"/>
</g>
<path d="M127.700 28.600H137.800L132.750 34.600Z" fill="#fff"/>
<g fill="none" stroke="#4b976b" stroke-width="3.100">
<path d="M168.650 20.600L178.550 27.300L168.650 34"/><path d="M177.850 27.300H164.850C158.350 27.300 155.650 30.800 155.650 34.600C155.650 38.900 159.650 41.900 165.450 42.700"/>
</g>
<path d="M190.900 28.600H200.500L195.700 34.400Z" fill="#4b976b"/>
<rect x="224.500" y="26" width="10.200" height="2.300" fill="#fff"/>
<path d="M224.300 31.200H234.800L229.550 37.900Z" fill="#fff"/>
</svg>
<svg class="t" style="left:1100px;top:12px" width="320" height="34" fill="none" stroke="#fff" stroke-width="1.7">
<path d="M24.300 8.400H46.400V25H24.300Z M24.300 12.300H46.400 M35.350 25V14.500 M31 18.600L35.350 14.400L39.700 18.600" stroke-width="1.7"/>
<path d="M110 17.500H128"/>
<path d="M193 8.500H210.500V25.500H193Z"/>
<path d="M276 8.500L293.500 25.500M293.500 8.500L276 25.500"/>
</svg>
<svg class="t" style="left:1100px;top:60px" width="60" height="50" fill="none" stroke="#fff" stroke-width="2">
<path d="M21.200 34.300C21.200 30.500 15.400 28.300 15.400 23.300A9.100 9.100 0 0 1 33.600 23.300C33.600 28.300 27.800 30.500 27.800 34.300Z M21.200 34.300V38.300H27.800V34.300 M22.200 41.800H26.800"/></svg>
<svg class="t" style="left:1336px;top:72px" width="36" height="32" fill="none" stroke="#fff" stroke-width="1.7">
<path d="M4.500 13V27.500H27V22"/><path d="M9.500 21.700C10.500 14.700 15 11.200 21.700 11.200V5.200L30.700 13.500L21.700 21.700V16.200C16 16.200 12.500 17.700 9.500 21.700Z"/></svg>
</body></html>
